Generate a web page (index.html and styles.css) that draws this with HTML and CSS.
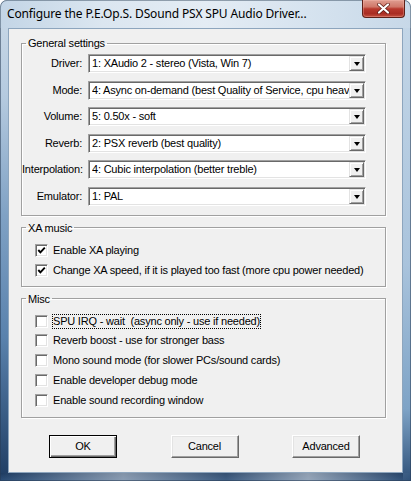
FILE: index.html
```html
<!DOCTYPE html>
<html>
<head>
<meta charset="utf-8">
<link rel="stylesheet" href="styles.css">
</head>
<body>
<div class="window">
  <div class="titlebar">
    <span class="title">Configure the P.E.Op.S. DSound PSX SPU Audio Driver...</span>
    <span class="close">
      <svg width="13" height="11" viewBox="0 0 13 11"><path d="M2 1.5 L11 9.5 M11 1.5 L2 9.5" stroke="#5a1a14" stroke-width="3.6" stroke-linecap="round"/><path d="M2 1.5 L11 9.5 M11 1.5 L2 9.5" stroke="#fff" stroke-width="2.2" stroke-linecap="round"/></svg>
    </span>
  </div>
  <div class="client">
    <fieldset class="group">
      <legend>General settings</legend>
      <div class="settings">
        <span class="lbl">Driver:</span>
        <div class="combo"><span class="val">1: XAudio 2 - stereo (Vista, Win 7)</span><span class="drop"><i class="arrow"></i></span></div>
        <span class="lbl">Mode:</span>
        <div class="combo"><span class="val">4: Async on-demand (best Quality of Service, cpu heavy)</span><span class="drop"><i class="arrow"></i></span></div>
        <span class="lbl">Volume:</span>
        <div class="combo"><span class="val">5: 0.50x - soft</span><span class="drop"><i class="arrow"></i></span></div>
        <span class="lbl">Reverb:</span>
        <div class="combo"><span class="val">2: PSX reverb (best quality)</span><span class="drop"><i class="arrow"></i></span></div>
        <span class="lbl">Interpolation:</span>
        <div class="combo"><span class="val">4: Cubic interpolation (better treble)</span><span class="drop"><i class="arrow"></i></span></div>
        <span class="lbl">Emulator:</span>
        <div class="combo"><span class="val">1: PAL</span><span class="drop"><i class="arrow"></i></span></div>
      </div>
    </fieldset>
    <fieldset class="group xa">
      <legend>XA music</legend>
      <div class="checks">
        <div class="check"><span class="box"><svg width="9" height="9" viewBox="0 0 9 9"><path d="M1.3 4 L3.4 6.3 L7.8 1.6" fill="none" stroke="#000" stroke-width="1.9"/></svg></span><span class="text">Enable XA playing</span></div>
        <div class="check"><span class="box"><svg width="9" height="9" viewBox="0 0 9 9"><path d="M1.3 4 L3.4 6.3 L7.8 1.6" fill="none" stroke="#000" stroke-width="1.9"/></svg></span><span class="text">Change XA speed, if it is played too fast (more cpu power needed)</span></div>
      </div>
    </fieldset>
    <fieldset class="group misc">
      <legend>Misc</legend>
      <div class="checks">
        <div class="check"><span class="box"></span><span class="text focus">SPU IRQ - wait  (async only - use if needed)</span></div>
        <div class="check"><span class="box"></span><span class="text">Reverb boost - use for stronger bass</span></div>
        <div class="check"><span class="box"></span><span class="text">Mono sound mode (for slower PCs/sound cards)</span></div>
        <div class="check"><span class="box"></span><span class="text">Enable developer debug mode</span></div>
        <div class="check"><span class="box"></span><span class="text">Enable sound recording window</span></div>
      </div>
    </fieldset>
    <div class="buttons">
      <span class="btn default">OK</span>
      <span class="btn">Cancel</span>
      <span class="btn">Advanced</span>
    </div>
  </div>
</div>
</body>
</html>
```
FILE: styles.css
```css
html, body {
  margin: 0;
  background: #ffffff;
}

.window {
  width: 411px;
  height: 481px;
  box-sizing: border-box;
  padding: 0 8px 8px 8px;
  display: flex;
  flex-direction: column;
  border-radius: 7px 7px 0 0;
  overflow: hidden;
  box-shadow: inset 0 0 0 1px rgba(40, 60, 85, 0.55);
  background:
    linear-gradient(to right, rgba(255,255,255,0) 0, rgba(255,255,255,0.45) 30%, rgba(255,255,255,0.1) 55%, rgba(255,255,255,0.5) 75%, rgba(255,255,255,0) 100%) 0 473px / 100% 8px no-repeat,
    linear-gradient(to bottom, #c6d8e8 0, #a9c3dc 55%, #7ea3c6 85%, #2f5179 100%) right top / 8px 100% no-repeat,
    linear-gradient(to bottom, #1d3b60 0, #2c4f78 100%) left 473px / 100% 8px no-repeat,
    linear-gradient(to bottom, #cbdae8 0, #b5cadf 20%, #7fa1c4 45%, #5a82ad 70%, #1e3c62 100%) left top / 100% 100% no-repeat;
  font-family: "Liberation Sans", Arial, sans-serif;
  font-size: 11px;
  letter-spacing: -0.2px;
  color: #000;
}

.titlebar {
  height: 28px;
  flex: none;
  display: flex;
  justify-content: space-between;
  align-items: flex-start;
  background: linear-gradient(to right, #c3d5e6 0, #dbe6f0 25%, #e4ecf4 50%, #d6e3ef 75%, #c7d8e8 100%);
  margin-left: -8px;
  margin-right: -8px;
  padding: 0 6px 0 7px;
  border-radius: 7px 7px 0 0;
  box-shadow: inset 0 1px 0 rgba(60, 80, 100, 0.5), inset 1px 0 0 rgba(60, 80, 100, 0.5), inset -1px 0 0 rgba(60, 80, 100, 0.5);
}

.title {
  font-family: "Noto Sans", "Open Sans", sans-serif;
  font-size: 12px;
  letter-spacing: -0.15px;
  line-height: 16px;
  padding-top: 6px;
  color: #000;
  white-space: nowrap;
}

.close {
  width: 43px;
  height: 18px;
  box-sizing: border-box;
  display: flex;
  align-items: center;
  justify-content: center;
  border: 1px solid #5e2018;
  border-top: none;
  border-radius: 0 0 4px 4px;
  background: linear-gradient(to bottom, #df9d90 0, #d0786a 40%, #b8392d 52%, #a92d23 80%, #c4503f 100%);
  box-shadow: inset 0 0 0 1px rgba(255, 200, 190, 0.3);
}

.client {
  flex: 1;
  background: #f0f0f0;
  border: 1px solid #8da5bd;
  padding: 7px 16px 0 12px;
  display: flex;
  flex-direction: column;
}

.group {
  margin: 0 0 5px 0;
  padding: 0;
  min-width: 0;
  border: 1px solid #a0a0a0;
  box-shadow: 1px 1px 0 #ffffff, inset 1px 1px 0 #ffffff;
}

.group legend {
  margin-left: 4px;
  padding: 0 2px;
  font-size: 11px;
  line-height: 14px;
}

.settings {
  display: grid;
  grid-template-columns: 60px 278px;
  column-gap: 6px;
  row-gap: 7.6px;
  padding: 4px 0 9px 0;
}

.lbl {
  text-align: right;
  line-height: 19px;
  white-space: nowrap;
}

.combo {
  height: 19px;
  box-sizing: border-box;
  display: flex;
  align-items: stretch;
  background: #ffffff;
  border: 1px solid;
  border-color: #a0a0a0 #ffffff #ffffff #a0a0a0;
  box-shadow: inset 1px 1px 0 #696969, inset -1px -1px 0 #e3e3e3;
  padding: 1px 1px 1px 3px;
}

.val {
  flex: 1;
  min-width: 0;
  overflow: hidden;
  white-space: nowrap;
  line-height: 15px;
}

.drop {
  width: 15px;
  flex: none;
  box-sizing: border-box;
  background: #f0f0f0;
  border: 1px solid;
  border-color: #e3e3e3 #696969 #696969 #e3e3e3;
  box-shadow: inset 1px 1px 0 #ffffff, inset -1px -1px 0 #a0a0a0;
  display: flex;
  align-items: center;
  justify-content: center;
}

.arrow {
  width: 0;
  height: 0;
  border-left: 3.5px solid transparent;
  border-right: 3.5px solid transparent;
  border-top: 4px solid #000;
  margin-top: 1px;
}

.checks {
  display: flex;
  flex-direction: column;
  gap: 4.75px;
  padding: 8px 0 6px 13px;
}

.xa .checks {
  padding-bottom: 8px;
}

.misc .checks {
  padding-bottom: 9px;
}

.check {
  display: flex;
  align-items: center;
  height: 15px;
  gap: 4px;
}

.box {
  width: 13px;
  height: 13px;
  flex: none;
  box-sizing: border-box;
  background: #ffffff;
  border: 1px solid;
  border-color: #a0a0a0 #ffffff #ffffff #a0a0a0;
  box-shadow: inset 1px 1px 0 #696969, inset -1px -1px 0 #e3e3e3;
  display: flex;
  align-items: center;
  justify-content: center;
}

.box svg {
  display: block;
}

.text {
  padding: 0 1px;
  line-height: 15px;
  white-space: pre;
}

.focus {
  outline: 1px dotted #000;
  outline-offset: -1px;
}

.buttons {
  display: flex;
  gap: 53.5px;
  margin: 12px 0 0 28px;
}

.btn {
  width: 68px;
  height: 23px;
  box-sizing: border-box;
  display: flex;
  align-items: center;
  justify-content: center;
  background: #f0f0f0;
  border: 1px solid;
  border-color: #ffffff #696969 #696969 #ffffff;
  box-shadow: inset -1px -1px 0 #a0a0a0, inset 1px 1px 0 #e3e3e3;
}

.btn.default {
  border-color: #000;
  box-shadow: inset 1px 1px 0 #ffffff, inset -1px -1px 0 #696969, inset -2px -2px 0 #a0a0a0;
}
```
